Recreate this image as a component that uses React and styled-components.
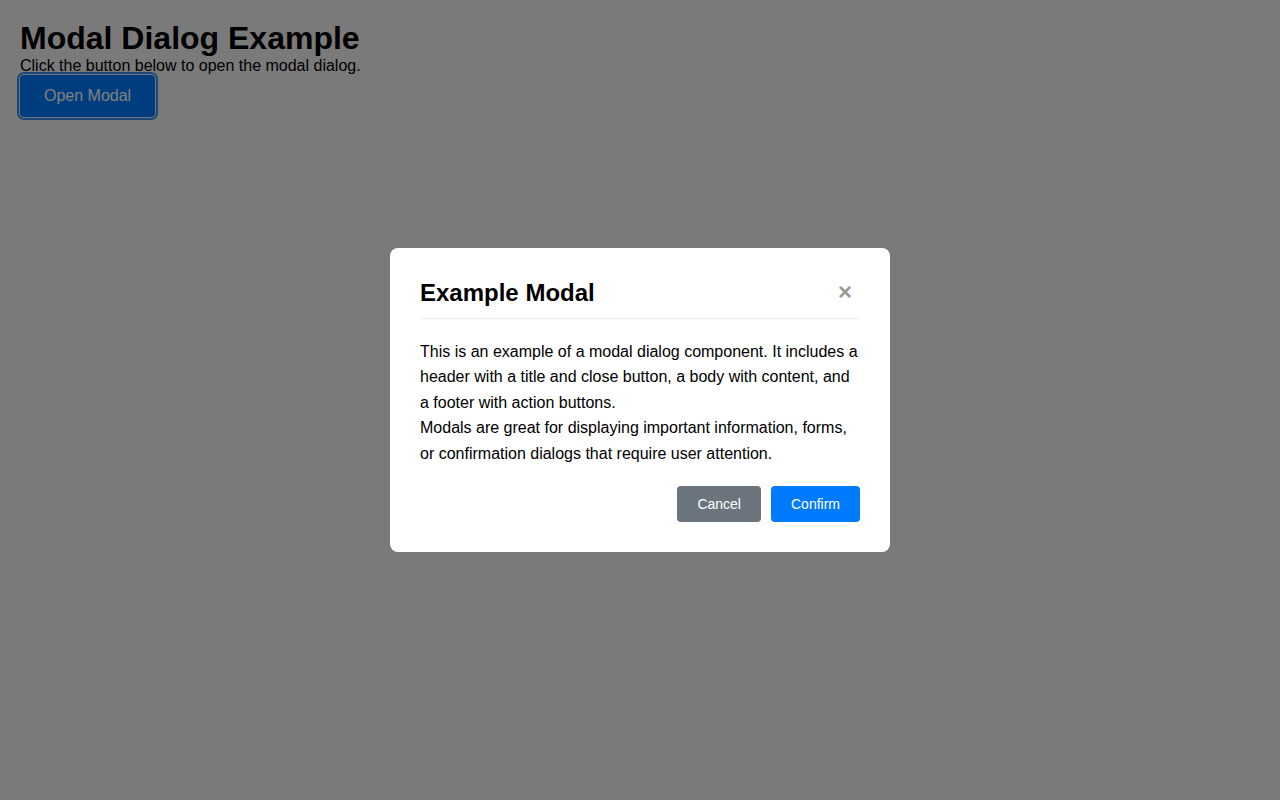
import React from "react";
import styled, { createGlobalStyle } from "styled-components";

const GlobalStyle = createGlobalStyle`
  html, body {
    margin: 0;
    padding: 0;
    background: #f5f5f5;
    font-family: "Liberation Sans", Arial, Helvetica, sans-serif;
    color: #000;
  }
  * { box-sizing: border-box; }
`;

const Page = styled.div`
  padding: 20px;
  min-height: 800px;
`;

const Title = styled.h1`
  margin: 0;
  font-size: 32px;
  font-weight: bold;
`;

const Intro = styled.p`
  margin: 0;
  font-size: 16px;
`;

const OpenButton = styled.button`
  font-family: inherit;
  font-size: 16px;
  padding: 12px 24px;
  background: #007bff;
  color: #fff;
  border: none;
  border-radius: 4px;
  cursor: pointer;
  box-shadow: 0 0 0 1px #e8e8e8, 0 0 0 3px #3a8ef2;
`;

const Overlay = styled.div`
  position: fixed;
  inset: 0;
  background: rgba(0, 0, 0, 0.5);
  display: flex;
  align-items: center;
  justify-content: center;
`;

const Dialog = styled.div`
  width: 500px;
  background: #fff;
  border-radius: 8px;
  padding: 30px;
`;

const Header = styled.div`
  display: flex;
  align-items: center;
  justify-content: space-between;
  padding-bottom: 12px;
  border-bottom: 1px solid #eee;
  margin-bottom: 20px;
`;

const DialogTitle = styled.h2`
  margin: 0;
  font-size: 24px;
  font-weight: bold;
  position: relative;
  top: 1px;
`;

const CloseButton = styled.button`
  background: none;
  border: none;
  font-family: inherit;
  font-size: 24px;
  font-weight: bold;
  color: #999;
  line-height: 1;
  padding: 0 8px 0 0;
  cursor: pointer;
`;

const Body = styled.div`
  font-size: 16px;
  line-height: 1.6;
`;

const BodyText = styled.p`
  margin: 0;
`;

const Footer = styled.div`
  display: flex;
  justify-content: flex-end;
  gap: 10px;
  margin-top: 20px;
`;

const ActionButton = styled.button`
  font-family: inherit;
  font-size: 14px;
  line-height: 16px;
  padding: 10px 20px;
  border: none;
  border-radius: 4px;
  color: #fff;
  background: ${(p) => (p.$variant === "primary" ? "#007bff" : "#6c757d")};
  cursor: pointer;
`;

export default function App() {
  return (
    <>
      <GlobalStyle />
      <Page>
        <Title>Modal Dialog Example</Title>
        <Intro>Click the button below to open the modal dialog.</Intro>
        <OpenButton>Open Modal</OpenButton>
      </Page>
      <Overlay>
        <Dialog role="dialog" aria-modal="true">
          <Header>
            <DialogTitle>Example Modal</DialogTitle>
            <CloseButton aria-label="Close">×</CloseButton>
          </Header>
          <Body>
            <BodyText>
              This is an example of a modal dialog component. It includes a
              header with a title and close button, a body with content, and a
              footer with action buttons.
            </BodyText>
            <BodyText>
              Modals are great for displaying important information, forms, or
              confirmation dialogs that require user attention.
            </BodyText>
          </Body>
          <Footer>
            <ActionButton>Cancel</ActionButton>
            <ActionButton $variant="primary">Confirm</ActionButton>
          </Footer>
        </Dialog>
      </Overlay>
    </>
  );
}
